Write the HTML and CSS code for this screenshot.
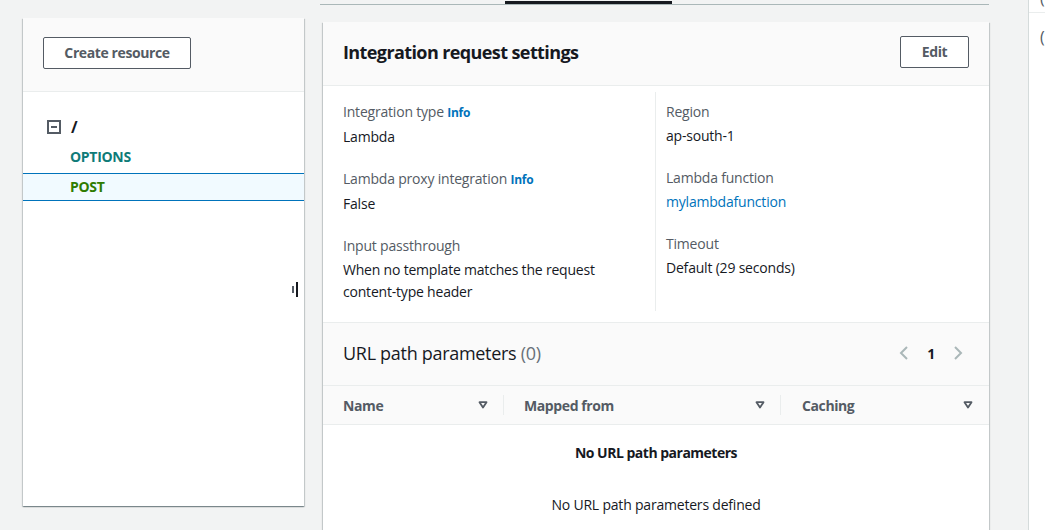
FILE: index.html
```html
<!DOCTYPE html>
<html lang="en">
<head>
<meta charset="utf-8">
<title>Integration request</title>
<link rel="stylesheet" href="styles.css">
</head>
<body>
<div class="page">
  <aside class="nav-col">
    <div class="panel">
      <div class="panel-header">
        <button class="btn">Create resource</button>
      </div>
      <div class="tree">
        <div class="tree-root">
          <svg class="minus-box" width="14" height="14" viewBox="0 0 14 14"><rect x="1" y="1" width="12" height="12" fill="none" stroke="#545b64" stroke-width="2"/><line x1="4" y1="7" x2="10" y2="7" stroke="#545b64" stroke-width="2"/></svg>
          <span class="root-path">/</span>
        </div>
        <div class="tree-item method-options">OPTIONS</div>
        <div class="tree-item method-post selected">POST</div>
      </div>
      <div class="handle"><span class="h1"></span><span class="h2"></span></div>
    </div>
  </aside>

  <main class="main-col">
    <div class="tabs"><span class="tab-active"></span></div>
    <section class="card">
      <header class="card-header">
        <h2 class="card-title">Integration request settings</h2>
        <button class="btn btn-edit">Edit</button>
      </header>
      <div class="settings">
        <div class="col">
          <div class="kv">
            <div class="label">Integration type <a class="info">Info</a></div>
            <div class="value">Lambda</div>
          </div>
          <div class="kv">
            <div class="label">Lambda proxy integration <a class="info">Info</a></div>
            <div class="value">False</div>
          </div>
          <div class="kv">
            <div class="label">Input passthrough</div>
            <div class="value">When no template matches the request<br>content-type header</div>
          </div>
        </div>
        <div class="col col-right">
          <div class="kv">
            <div class="label">Region</div>
            <div class="value">ap-south-1</div>
          </div>
          <div class="kv">
            <div class="label">Lambda function</div>
            <div class="value"><a class="link">mylambdafunction</a></div>
          </div>
          <div class="kv">
            <div class="label">Timeout</div>
            <div class="value">Default (29 seconds)</div>
          </div>
        </div>
      </div>

      <div class="sub-header">
        <h3 class="sub-title">URL path parameters <span class="count">(0)</span></h3>
        <div class="pager">
          <svg width="10" height="14" viewBox="0 0 10 14"><path d="M8 1 L2 7 L8 13" fill="none" stroke="#aab7b8" stroke-width="2"/></svg>
          <span class="page-num">1</span>
          <svg width="10" height="14" viewBox="0 0 10 14"><path d="M2 1 L8 7 L2 13" fill="none" stroke="#aab7b8" stroke-width="2"/></svg>
        </div>
      </div>

      <div class="thead">
        <div class="th th-name"><span>Name</span><svg class="sort" width="10" height="8" viewBox="0 0 10 8"><path d="M1.5 1.2 H8.5 L5 6.6 Z" fill="none" stroke="#545b64" stroke-width="1.8" stroke-linejoin="round"/></svg></div>
        <div class="th th-mapped"><span>Mapped from</span><svg class="sort" width="10" height="8" viewBox="0 0 10 8"><path d="M1.5 1.2 H8.5 L5 6.6 Z" fill="none" stroke="#545b64" stroke-width="1.8" stroke-linejoin="round"/></svg></div>
        <div class="th th-caching"><span>Caching</span><svg class="sort" width="10" height="8" viewBox="0 0 10 8"><path d="M1.5 1.2 H8.5 L5 6.6 Z" fill="none" stroke="#545b64" stroke-width="1.8" stroke-linejoin="round"/></svg></div>
      </div>
      <div class="empty">
        <div class="empty-title">No URL path parameters</div>
        <div class="empty-text">No URL path parameters defined</div>
      </div>
    </section>
  </main>

  <div class="side-strip">
    <div class="strip-top">(</div>
    <div class="strip-row">(</div>
  </div>
</div>
</body>
</html>
```

FILE: styles.css
```css
* { box-sizing: border-box; }
html, body { margin: 0; padding: 0; }
body {
  background: #f2f3f3;
  font-family: "Open Sans", "Noto Sans", sans-serif;
  font-size: 14px;
  letter-spacing: -0.2px;
  color: #16191f;
  width: 1045px;
  height: 530px;
  overflow: hidden;
}
.page {
  display: flex;
  height: 530px;
  overflow: hidden;
}

/* left navigation */
.nav-col {
  padding: 18px 0 0 23px;
  flex: 0 0 auto;
}
.panel {
  position: relative;
  width: 281px;
  height: 488px;
  background: #fff;
  box-shadow: 0 1px 1px 0 rgba(0,28,36,.3), 1px 1px 1px 0 rgba(0,28,36,.15), -1px 1px 1px 0 rgba(0,28,36,.15);
}
.panel-header {
  height: 74px;
  background: #fafafa;
  border-bottom: 1px solid #eaeded;
  padding: 19px 20px 0;
}
.btn {
  font-family: inherit;
  font-size: 14px;
  font-weight: 700;
  letter-spacing: -0.4px;
  color: #545b64;
  background: #fff;
  border: 1px solid #545b64;
  border-radius: 2px;
  height: 32px;
  padding: 0 20px;
  line-height: 20px;
}
.panel-header .btn { width: 148px; padding: 0; }
.tree { padding-top: 26px; }
.tree-root {
  display: flex;
  align-items: center;
  height: 18px;
  padding-left: 24px;
  margin-bottom: 9px;
}
.minus-box { display: block; margin-right: 10px; }
.root-path { font-weight: 700; font-size: 16px; color: #16191f; }
.tree-item {
  font-size: 14px;
  font-weight: 700;
  letter-spacing: -0.3px;
  line-height: 26px;
  height: 28px;
  padding-left: 47px;
  border-top: 1px solid transparent;
  border-bottom: 1px solid transparent;
}
.method-options { color: #0f7b78; margin-top: -2px; }
.method-post { color: #2f7c00; margin-top: 2px; }
.tree-item.selected {
  background: #f1faff;
  border-top-color: #0073bb;
  border-bottom-color: #0073bb;
}
.handle {
  position: absolute;
  left: 269px;
  top: 264px;
  display: flex;
  align-items: center;
  gap: 2px;
  height: 15px;
}
.handle .h1 { display: block; width: 2px; height: 7px; background: #545b64; }
.handle .h2 { display: block; width: 2px; height: 15px; background: #16191f; }

/* main column */
.main-col {
  flex: 0 0 auto;
  width: 666px;
  margin-left: 19px;
}
.tabs {
  position: relative;
  height: 5px;
  border-bottom: 1px solid #aab7b8;
  margin-left: -3px;
}
.tab-active {
  position: absolute;
  left: 185px;
  top: 1px;
  width: 167px;
  height: 3px;
  background: #16191f;
}
.card {
  margin-top: 17px;
  background: #fff;
  box-shadow: 0 1px 1px 0 rgba(0,28,36,.3), 1px 1px 1px 0 rgba(0,28,36,.15), -1px 1px 1px 0 rgba(0,28,36,.15);
  height: 520px;
}
.card-header {
  display: flex;
  align-items: center;
  justify-content: space-between;
  height: 64px;
  padding: 0 20px 3px;
  background: #fafafa;
  border-bottom: 1px solid #eaeded;
}
.card-title {
  margin: 0;
  font-size: 18px;
  font-weight: 700;
  letter-spacing: -0.6px;
  line-height: 22px;
  color: #16191f;
}
.btn-edit { width: 69px; padding: 0; }

.settings {
  display: grid;
  grid-template-columns: 332px 1fr;
  padding: 6px 0 11px;
}
.col {
  padding: 9px 20px 8px;
  display: flex;
  flex-direction: column;
  gap: 20px;
}
.col-right {
  border-left: 1px solid #eaeded;
  padding-left: 10px;
}
.label { color: #545b64; line-height: 22px; }
.value { color: #16191f; line-height: 22px; margin-top: 2px; }
.info { color: #0073bb; font-weight: 700; font-size: 12px; letter-spacing: -0.3px; }
.link { color: #0073bb; }

.sub-header {
  display: flex;
  align-items: center;
  justify-content: space-between;
  height: 64px;
  padding: 0 26px 2px 20px;
  background: #fafafa;
  border-top: 1px solid #eaeded;
  border-bottom: 1px solid #eaeded;
}
.sub-title {
  margin: 0;
  font-size: 18px;
  font-weight: 400;
  letter-spacing: -0.3px;
  line-height: 22px;
  color: #16191f;
}
.count { color: #687078; }
.pager { display: flex; align-items: center; gap: 18px; }
.pager svg { display: block; }
.page-num { font-weight: 700; color: #16191f; }

.thead {
  display: grid;
  grid-template-columns: 180px 277px 1fr;
  height: 39px;
  background: #fafafa;
  border-bottom: 1px solid #eaeded;
  align-items: center;
}
.th {
  display: flex;
  align-items: center;
  justify-content: space-between;
  font-weight: 700;
  letter-spacing: -0.4px;
  color: #545b64;
  padding: 0 15px 0 20px;
  height: 20px;
}
.th + .th { border-left: 1px solid #eaeded; }
.th-caching { padding-left: 21px; padding-right: 16px; }
.sort { display: block; }

.empty { text-align: center; padding-top: 17px; }
.empty-title { font-weight: 700; letter-spacing: -0.5px; line-height: 22px; color: #16191f; }
.empty-text { line-height: 22px; margin-top: 30px; color: #16191f; }

/* right strip */
.side-strip {
  flex: 1 1 auto;
  margin-left: 39px;
  background: #fff;
  border-left: 1px solid #d5dbdb;
  color: #545b64;
  font-size: 16px;
}
.strip-top {
  height: 19px;
  line-height: 8px;
  margin-top: -6px;
  padding-left: 11px;
  border-bottom: 1px solid #eaeded;
}
.strip-row { padding: 13px 0 0 11px; line-height: 22px; }
```
